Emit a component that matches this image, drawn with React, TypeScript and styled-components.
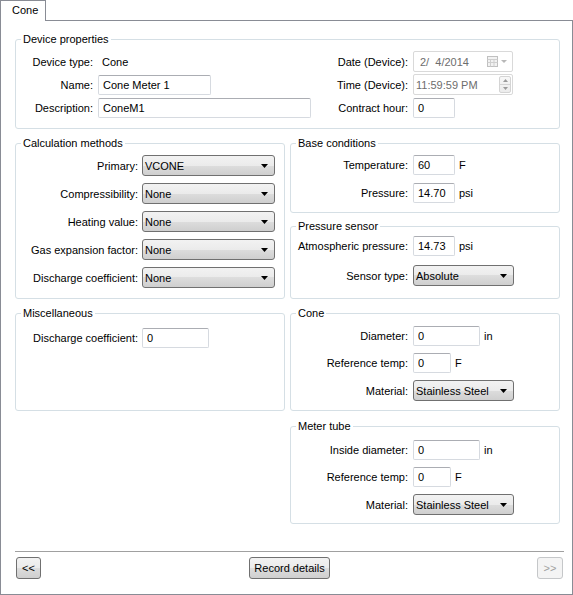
import { ReactNode } from 'react';
import styled, { createGlobalStyle } from 'styled-components';

const GlobalStyle = createGlobalStyle`
	html, body {
		margin: 0;
		padding: 0;
		background: #fff;
	}
	body {
		font-family: 'Liberation Sans', Arial, sans-serif;
		font-size: 11px;
		color: #000;
	}
	* {
		box-sizing: border-box;
	}
`;

const Window = styled.div`
	width: 573px;
	height: 595px;
	display: flex;
	flex-direction: column;
	background: #fff;
`;

const TabStrip = styled.div`
	display: flex;
	height: 20px;
`;

const Tab = styled.div`
	position: relative;
	z-index: 1;
	width: 46px;
	height: 21px;
	padding-left: 11px;
	line-height: 19px;
	border: 1px solid #898c95;
	border-bottom: none;
	background: #fff;
`;

const Panel = styled.div`
	flex: 1;
	display: flex;
	flex-direction: column;
	border: 1px solid #898c95;
	padding: 12px 12px 15px 14px;
`;

const Layout = styled.div`
	display: grid;
	grid-template-columns: 270px 270px;
	column-gap: 5px;
	row-gap: 8px;
`;

const Stack = styled.div`
	display: flex;
	flex-direction: column;
	gap: 7px;
`;

const Group = styled.fieldset<{ $wide?: boolean; $col?: number; $grow?: boolean; $top?: number }>`
	margin: ${({ $top }) => $top ?? 0}px 0 0 0;
	padding: 0;
	min-width: 0;
	border: 1px solid #d5dfe5;
	border-radius: 3px;
	${({ $wide }) => ($wide ? 'grid-column: 1 / -1;' : '')}
	${({ $col }) => ($col ? `grid-column: ${$col};` : '')}
	${({ $grow }) => ($grow ? 'flex: 1;' : '')}
`;

const Legend = styled.legend`
	margin-left: 5px;
	padding: 0 2px;
	font-size: 11px;
	line-height: 13px;
`;

const Form = styled.div<{ $label: number; $gap: number; $pad: string }>`
	display: grid;
	grid-template-columns: ${({ $label }) => $label}px auto;
	justify-content: start;
	align-items: center;
	column-gap: ${({ $label }) => ($label > 120 ? 4 : 5)}px;
	row-gap: ${({ $gap }) => $gap}px;
	padding: ${({ $pad }) => $pad};
`;

const DeviceForm = styled.div`
	display: grid;
	grid-template-columns: 77px 213px 1fr 100px;
	grid-auto-rows: 21px;
	align-items: center;
	column-gap: 5px;
	row-gap: 2px;
	padding: 5px 46px 10px 0;
`;

const Label = styled.span`
	text-align: right;
	white-space: nowrap;
`;

const Value = styled.span`
	padding-left: 4px;
`;

const Field = styled.div`
	display: flex;
	align-items: center;
	gap: 4px;
`;

const TextBox = styled.input<{ $w: number }>`
	width: ${({ $w }) => $w}px;
	height: 20px;
	margin: 0;
	padding: 0 0 0 4px;
	font: inherit;
	color: #000;
	background: #fff;
	border: 1px solid #d6dae0;
	border-top-color: #abadb3;
	border-radius: 2px;
	outline: none;
`;

const DisabledBox = styled.div`
	width: 100px;
	height: 21px;
	display: flex;
	align-items: center;
	justify-content: space-between;
	padding: 0 4px 0 6px;
	color: #6d6d6d;
	border: 1px solid #d9d9d9;
	border-radius: 2px;
	background: #fff;
`;

const TimeBox = styled(DisabledBox)`
	padding: 0 1px 0 2px;
`;

const Spinner = styled.div`
	width: 12px;
	height: 17px;
	display: flex;
	flex-direction: column;
	border: 1px solid #d4d4d4;
	border-radius: 2px;
	background: linear-gradient(#f7f7f7, #ececec);
`;

const SpinHalf = styled.div<{ $down?: boolean }>`
	flex: 1;
	display: flex;
	align-items: center;
	justify-content: center;
	${({ $down }) => ($down ? 'border-top: 1px solid #d4d4d4;' : '')}
`;

const Combo = styled.div<{ $w: number }>`
	width: ${({ $w }) => $w}px;
	height: 21px;
	display: flex;
	align-items: center;
	justify-content: space-between;
	padding: 0 6px 0 2px;
	border: 1px solid #707070;
	border-radius: 3px;
	background: linear-gradient(#f2f2f2 0%, #ebebeb 50%, #dddddd 50%, #cfcfcf 100%);
`;

const Footer = styled.div`
	margin-top: auto;
	margin-right: -4px;
	display: grid;
	grid-template-columns: 1fr auto 1fr;
	align-items: center;
	padding: 5px 1px 0 1px;
	border-top: 1px solid #a0a0a0;
`;

const Button = styled.button<{ $w: number; $end?: boolean }>`
	width: ${({ $w }) => $w}px;
	height: 22px;
	margin: 0;
	padding: 0;
	font: inherit;
	color: #000;
	border: 1px solid #707070;
	border-radius: 3px;
	background: linear-gradient(#f2f2f2 0%, #ebebeb 50%, #dddddd 50%, #cfcfcf 100%);
	justify-self: ${({ $end }) => ($end ? 'end' : 'start')};

	&:disabled {
		color: #a0a0a0;
		border-color: #c5c7c9;
		background: #f4f4f4;
	}
`;

const DownArrow = ({ color = '#000' }: { color?: string }) => (
	<svg width="7" height="4" viewBox="0 0 7 4">
		<path d="M0 0h7L3.5 4z" fill={color} />
	</svg>
);

const ComboBox = ({ w, children }: { w: number; children: ReactNode }) => (
	<Combo $w={w}>
		<span>{children}</span>
		<DownArrow />
	</Combo>
);

// small greyed calendar glyph of the date picker
const CalendarIcon = () => (
	<svg width="21" height="11" viewBox="0 0 21 11">
		<rect x="0.5" y="0.5" width="10" height="10" fill="#f2f2f2" stroke="#c0c0c0" />
		<path d="M0.5 3.5h10M0.5 6.5h10M3.5 3.5v7M7 3.5v7" stroke="#cfcfcf" />
		<path d="M14 4h6l-3 3z" fill="#b8b8b8" />
	</svg>
);

const SpinArrow = ({ down }: { down?: boolean }) => (
	<svg width="5" height="3" viewBox="0 0 5 3">
		<path d={down ? 'M0 0h5L2.5 3z' : 'M0 3h5L2.5 0z'} fill="#9a9a9a" />
	</svg>
);

const Unit = ({ children }: { children: ReactNode }) => <span>{children}</span>;

export default function App() {
	return (
		<Window>
			<GlobalStyle />
			<TabStrip>
				<Tab>Cone</Tab>
			</TabStrip>
			<Panel>
				<Layout>
					<Group $wide>
						<Legend>Device properties</Legend>
						<DeviceForm>
							<Label>Device type:</Label>
							<Value>Cone</Value>
							<Label>Date (Device):</Label>
							<DisabledBox>
								<span>2/&nbsp;&nbsp;4/2014</span>
								<CalendarIcon />
							</DisabledBox>

							<Label>Name:</Label>
							<TextBox $w={113} readOnly value="Cone Meter 1" />
							<Label>Time (Device):</Label>
							<TimeBox>
								<span>11:59:59 PM</span>
								<Spinner>
									<SpinHalf>
										<SpinArrow />
									</SpinHalf>
									<SpinHalf $down>
										<SpinArrow down />
									</SpinHalf>
								</Spinner>
							</TimeBox>

							<Label>Description:</Label>
							<TextBox $w={213} readOnly value="ConeM1" />
							<Label>Contract hour:</Label>
							<TextBox $w={42} readOnly value="0" />
						</DeviceForm>
					</Group>

					<Group>
						<Legend>Calculation methods</Legend>
						<Form $label={122} $gap={7} $pad="5px 0 10px 0">
							<Label>Primary:</Label>
							<ComboBox w={133}>VCONE</ComboBox>
							<Label>Compressibility:</Label>
							<ComboBox w={133}>None</ComboBox>
							<Label>Heating value:</Label>
							<ComboBox w={133}>None</ComboBox>
							<Label>Gas expansion factor:</Label>
							<ComboBox w={133}>None</ComboBox>
							<Label>Discharge coefficient:</Label>
							<ComboBox w={133}>None</ComboBox>
						</Form>
					</Group>

					<Stack>
						<Group>
							<Legend>Base conditions</Legend>
							<Form $label={117} $gap={8} $pad="5px 0 9px 0">
								<Label>Temperature:</Label>
								<Field>
									<TextBox $w={42} readOnly value="60" />
									<Unit>F</Unit>
								</Field>
								<Label>Pressure:</Label>
								<Field>
									<TextBox $w={42} readOnly value="14.70" />
									<Unit>psi</Unit>
								</Field>
							</Form>
						</Group>
						<Group $grow>
							<Legend>Pressure sensor</Legend>
							<Form $label={117} $gap={9} $pad="3px 0 11px 0">
								<Label>Atmospheric pressure:</Label>
								<Field>
									<TextBox $w={42} readOnly value="14.73" />
									<Unit>psi</Unit>
								</Field>
								<Label>Sensor type:</Label>
								<ComboBox w={101}>Absolute</ComboBox>
							</Form>
						</Group>
					</Stack>

					<Group>
						<Legend>Miscellaneous</Legend>
						<Form $label={122} $gap={7} $pad="8px 0 9px 0">
							<Label>Discharge coefficient:</Label>
							<TextBox $w={67} readOnly value="0" />
						</Form>
					</Group>

					<Group>
						<Legend>Cone</Legend>
						<Form $label={117} $gap={7} $pad="6px 0 9px 0">
							<Label>Diameter:</Label>
							<Field>
								<TextBox $w={67} readOnly value="0" />
								<Unit>in</Unit>
							</Field>
							<Label>Reference temp:</Label>
							<Field>
								<TextBox $w={38} readOnly value="0" />
								<Unit>F</Unit>
							</Field>
							<Label>Material:</Label>
							<ComboBox w={101}>Stainless Steel</ComboBox>
						</Form>
					</Group>

					<Group $col={2} $top={1}>
						<Legend>Meter tube</Legend>
						<Form $label={117} $gap={7} $pad="7px 0 8px 0">
							<Label>Inside diameter:</Label>
							<Field>
								<TextBox $w={67} readOnly value="0" />
								<Unit>in</Unit>
							</Field>
							<Label>Reference temp:</Label>
							<Field>
								<TextBox $w={38} readOnly value="0" />
								<Unit>F</Unit>
							</Field>
							<Label>Material:</Label>
							<ComboBox w={101}>Stainless Steel</ComboBox>
						</Form>
					</Group>
				</Layout>

				<Footer>
					<Button $w={25}>&lt;&lt;</Button>
					<Button $w={81}>Record details</Button>
					<Button $w={26} $end disabled>
						&gt;&gt;
					</Button>
				</Footer>
			</Panel>
		</Window>
	);
}
